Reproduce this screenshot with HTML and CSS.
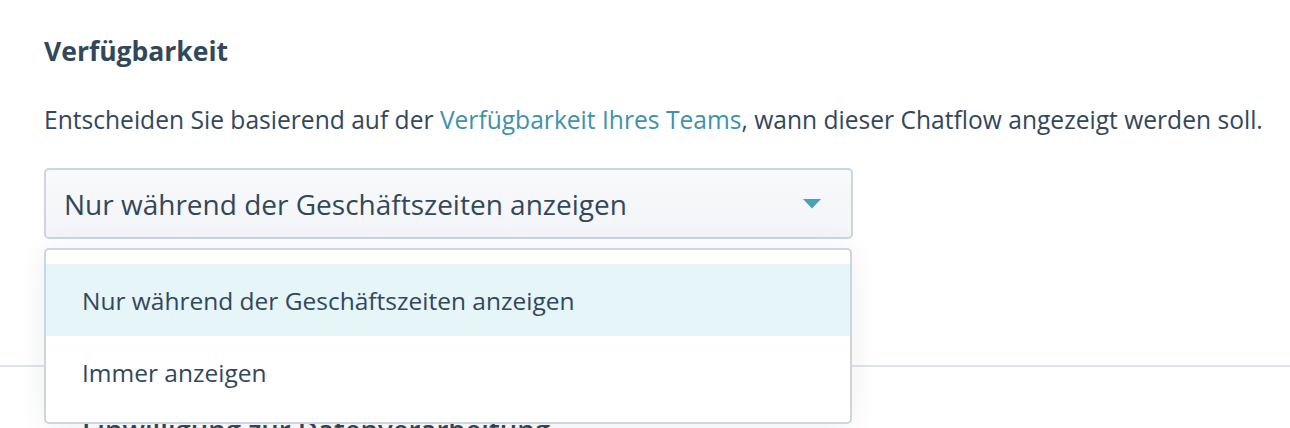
FILE: index.html
```html
<!DOCTYPE html>
<html lang="de">
<head>
<meta charset="utf-8">
<link rel="stylesheet" href="styles.css">
</head>
<body>
<main class="page">
  <section class="availability">
    <h2 class="title">Verfügbarkeit</h2>
    <p class="desc">Entscheiden Sie basierend auf der <a class="link" href="#">Verfügbarkeit Ihres Teams</a>, wann dieser Chatflow angezeigt werden soll.</p>
    <div class="select-wrap">
      <div class="select">
        <span class="select-value">Nur während der Geschäftszeiten anzeigen</span>
        <svg class="caret" width="18" height="10" viewBox="0 0 18 10"><path d="M0 0 H18 L9 9.5 Z" fill="#47a2b8"/></svg>
      </div>
      <ul class="menu">
        <li class="option selected">Nur während der Geschäftszeiten anzeigen</li>
        <li class="option">Immer anzeigen</li>
      </ul>
    </div>
  </section>
  <hr class="divider">
  <section class="consent">
    <h2 class="title2">Einwilligung zur Datenverarbeitung</h2>
  </section>
</main>
</body>
</html>
```
FILE: styles.css
```css
* { box-sizing: border-box; }
html, body { margin: 0; padding: 0; background: #fff; }
body {
  font-family: "Open Sans", "Noto Sans", sans-serif;
  color: #33475b;
  overflow: hidden;
  height: 428px;
}
.page { padding: 33px 0 0 44px; height: 428px; overflow: hidden; }
.title {
  margin: 0;
  font-size: 26.5px;
  font-weight: 700;
  line-height: 36px;
}
.desc {
  margin: 36px 0 0;
  font-size: 24.6px;
  line-height: 30px;
  white-space: nowrap;
}
.link { color: #3e92ab; text-decoration: none; }
.select-wrap { position: relative; margin-top: 33px; width: 809px; }
.select {
  height: 71px;
  border: 2px solid #cbd6e2;
  border-radius: 5px;
  background: linear-gradient(#f7f9fb, #f3f5f8);
  display: flex;
  align-items: center;
  justify-content: space-between;
  padding: 0 30px 0 18px;
}
.select-value { font-size: 28px; }
.caret { display: block; }
.menu {
  position: absolute;
  left: 0;
  top: 80px;
  width: 808px;
  margin: 0;
  padding: 14px 0 14px;
  list-style: none;
  background: #fff;
  border: 2px solid #cbd6e2;
  border-radius: 5px;
  box-shadow: 0 2px 30px rgba(0,0,0,0.07);
  z-index: 2;
}
.option {
  height: 72px;
  display: flex;
  align-items: center;
  padding-left: 36px;
  font-size: 24.5px;
}
.option.selected { background: #e5f5f8; }
.divider {
  margin: 126px 0 0 -44px;
  border: 0;
  height: 2px;
  background: #dfe3eb;
}
.consent { padding-top: 44px; }
.title2 { margin: 0 0 0 38px; font-size: 27.5px; font-weight: 600; white-space: nowrap; }
```
